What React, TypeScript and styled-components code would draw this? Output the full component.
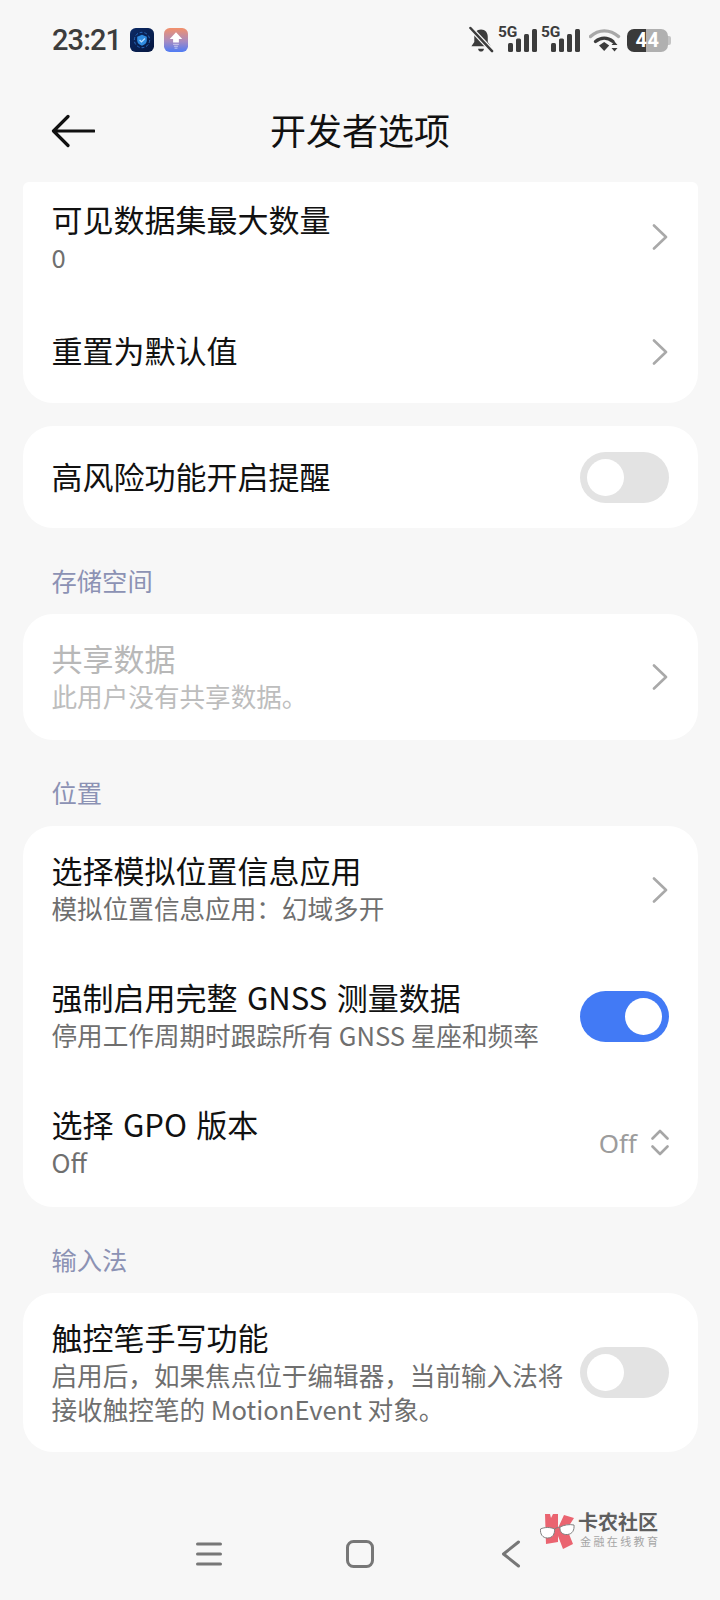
import React from "react";
import styled, { createGlobalStyle } from "styled-components";

const Global = createGlobalStyle`
  html, body { margin: 0; padding: 0; background: #f7f7f7; }
  body { width: 720px; height: 1600px; overflow: hidden; font-family: "Noto Sans CJK SC", "Noto Sans", sans-serif; }
  * { box-sizing: border-box; }
`;

const Page = styled.div`
  position: relative;
  width: 720px;
  height: 1600px;
  display: flex;
  flex-direction: column;
  background: #f7f7f7;
  overflow: hidden;
`;

const StatusBar = styled.div`
  height: 80px;
  padding: 0 52px 0 52px;
  display: flex;
  align-items: center;
  justify-content: space-between;
`;
const StatusGroup = styled.div<{ $gap: number }>`
  display: flex;
  align-items: center;
  gap: ${(p) => p.$gap}px;
`;
const Clock = styled.span`
  font-family: "Roboto", sans-serif;
  font-size: 29px;
  font-weight: 500;
  letter-spacing: -0.9px;
  color: #3c3c3c;
  margin-right: -1px;
  line-height: 1;
`;
const SignalBox = styled.span`
  position: relative;
  display: block;
  width: 39px;
  height: 28px;
`;
const FiveG = styled.span`
  position: absolute;
  left: 0;
  top: -2px;
  font-family: "Roboto", sans-serif;
  font-size: 15.5px;
  font-weight: 700;
  line-height: 16px;
  color: #3c3c3c;
  letter-spacing: -0.2px;
`;
const WifiSlot = styled.span`
  display: block;
  height: 24px;
  margin: 0 2px 0 5px;
`;
const BatteryBody = styled.span`
  position: relative;
  display: flex;
  align-items: center;
  justify-content: center;
  width: 41px;
  height: 23px;
  border-radius: 7px;
  background: linear-gradient(90deg, #3a3a3a 0 46%, #b0b0b0 46% 100%);
  color: #fff;
  font-family: "Roboto", sans-serif;
  font-weight: 700;
  font-size: 20px;
  line-height: 23px;
  letter-spacing: 0.6px;
  &::after {
    content: "";
    position: absolute;
    right: -3px;
    top: 7px;
    width: 3px;
    height: 9px;
    border-radius: 0 2px 2px 0;
    background: #c4c4c4;
  }
`;

const Header = styled.div`
  height: 102px;
  padding: 0 52px 0 51px;
  display: grid;
  grid-template-columns: 45px 1fr 44px;
  align-items: center;
`;
const Title = styled.h1`
  margin: -4px 0 0;
  text-align: center;
  font-size: 36px;
  font-weight: 400;
  line-height: 44px;
  color: #111;
`;

const Content = styled.div`
  flex: 1;
  padding: 0 22.5px;
  display: flex;
  flex-direction: column;
`;
const Card = styled.div<{ $cut?: boolean }>`
  background: #fff;
  border-radius: ${(p) => (p.$cut ? "6px 6px 30px 30px" : "30px")};
  overflow: hidden;
  margin-bottom: ${(p) => (p.$cut ? "23px" : "0")};
`;
const SectionLabel = styled.div`
  height: 86px;
  padding: 35px 0 0 29px;
  font-size: 25.3px;
  line-height: 34px;
  color: #8c92b4;
`;
const Row = styled.div<{ $h?: number; $top?: number }>`
  display: flex;
  align-items: center;
  justify-content: space-between;
  min-height: ${(p) => p.$h ?? 127}px;
  margin-top: ${(p) => p.$top ?? 0}px;
  padding: 0 28.5px 0 29px;
`;
const RowText = styled.div<{ $lift?: number }>`
  display: flex;
  flex-direction: column;
  min-width: 0;
  padding-bottom: ${(p) => p.$lift ?? 3}px;
`;
const RowTitle = styled.div<{ $off?: boolean }>`
  font-size: 31px;
  line-height: 40px;
  word-spacing: 2.5px;
  white-space: nowrap;
  color: ${(p) => (p.$off ? "#b8b8b8" : "#111")};
`;
const RowSub = styled.div<{ $off?: boolean }>`
  font-size: 25.6px;
  line-height: 36px;
  color: ${(p) => (p.$off ? "#bdbdbd" : "#6f6f6f")};
  white-space: nowrap;
`;
const RowSubWrap = styled(RowSub)`
  line-height: 34px;
  margin-top: 1px;
  width: 516px;
  white-space: normal;
`;
const Toggle = styled.span<{ $on?: boolean }>`
  flex: none;
  display: flex;
  align-items: center;
  justify-content: ${(p) => (p.$on ? "flex-end" : "flex-start")};
  width: 89px;
  height: 51px;
  padding: 0 7px;
  border-radius: 26px;
  background: ${(p) => (p.$on ? "#427af5" : "#e3e3e3")};
`;
const Knob = styled.span`
  display: block;
  width: 37px;
  height: 37px;
  border-radius: 50%;
  background: #fff;
`;
const Value = styled.div`
  display: flex;
  align-items: center;
  gap: 14px;
  padding-bottom: 2px;
  font-family: "Noto Sans", sans-serif;
  font-size: 26px;
  color: #9c9c9c;
`;

const NavBar = styled.div`
  position: absolute;
  left: 0;
  right: 0;
  bottom: 32px;
  height: 28px;
`;
const NavRow = styled.div`
  height: 100%;
  padding-left: 196px;
  display: flex;
  align-items: center;
  gap: 124px;
`;
const Mark = styled.div`
  position: absolute;
  left: 540px;
  top: 1510px;
  display: flex;
  gap: 3px;
`;
const MarkText = styled.div`
  display: flex;
  flex-direction: column;
`;
const MarkName = styled.span`
  font-size: 20px;
  font-weight: 700;
  line-height: 24px;
  color: #5f5f5f;
`;
const MarkSub = styled.span`
  font-size: 11px;
  line-height: 12px;
  margin-top: 1px;
  color: #a5a5a5;
  letter-spacing: 2.4px;
  padding-left: 2px;
  white-space: nowrap;
`;

const Chevron = () => (
  <svg width="18" height="26" viewBox="0 0 18 26" fill="none" style={{ flex: "none" }}>
    <path d="M3 1.500 15 13 3 24.500" stroke="#a9a9a9" strokeWidth="2.600" strokeLinecap="round" strokeLinejoin="round" />
  </svg>
);
const UpDown = () => (
  <svg width="18" height="27" viewBox="0 0 18 27" fill="none">
    <path d="M1.500 9.500 9 2l7.500 7.500M1.500 17.500 9 25l7.500-7.500" stroke="#a6a6a6" strokeWidth="2.600" strokeLinecap="round" strokeLinejoin="round" />
  </svg>
);
const BackArrow = () => (
  <svg width="44" height="34" viewBox="0 0 44 34" fill="none">
    <path d="M17 2.500 2.500 17 17 31.500M3 17h40" stroke="#111" strokeWidth="3.200" strokeLinecap="round" strokeLinejoin="round" />
  </svg>
);
const AppShield = () => (
  <svg width="24" height="24" viewBox="0 0 25 25">
    <defs>
      <linearGradient id="nv" x1="0" y1="0" x2="1" y2="1">
        <stop offset="0" stopColor="#0c2a66" />
        <stop offset="1" stopColor="#06173f" />
      </linearGradient>
    </defs>
    <rect width="25" height="25" rx="6" fill="url(#nv)" />
    <circle cx="12.500" cy="12.500" r="8" fill="none" stroke="#2a6cc0" strokeWidth="1" strokeDasharray="3 2" />
    <path d="M12.500 7 17.500 9v4c0 2.600-2 4.400-5 5.400-3-1-5-2.800-5-5.400V9Z" fill="#2f8be0" />
    <path d="m10 12.500 2 2 3.500-3.500" fill="none" stroke="#bfe0ff" strokeWidth="1.300" />
  </svg>
);
const AppUpload = () => (
  <svg width="24" height="24" viewBox="0 0 25 25">
    <defs>
      <linearGradient id="up" x1="0" y1="0" x2="0" y2="1">
        <stop offset="0" stopColor="#f3906a" />
        <stop offset="0.55" stopColor="#a88bc0" />
        <stop offset="1" stopColor="#4f7cf5" />
      </linearGradient>
    </defs>
    <rect width="25" height="25" rx="6" fill="url(#up)" />
    <path d="M12.500 4.500 19 11.500h-3.500V15h-6v-3.500H6Z" fill="#fff" />
    <path d="M9.500 17h6M10.500 19h4M11 21h3" stroke="#fff" strokeWidth="1" opacity=".6" />
  </svg>
);
const BellOff = () => (
  <svg width="25" height="28" viewBox="0 0 26 28" fill="none">
    <path d="M12.500 3c-4.500 0-7 3.300-7 7.500V16L2.500 20.500h20L19.500 16v-5.500C19.500 6.300 17 3 12.500 3Z" fill="#3c3c3c" />
    <path d="M9.500 23h6c0 1.800-1.300 3-3 3s-3-1.200-3-3Z" fill="#3c3c3c" />
    <path d="M1 1 24.500 26" stroke="#f7f7f7" strokeWidth="5" />
    <path d="M1.500 1.500 24 25.500" stroke="#3c3c3c" strokeWidth="2.600" strokeLinecap="round" />
  </svg>
);
const Bars = () => (
  <svg width="29" height="23" viewBox="0 0 29 23" style={{ position: "absolute", left: 10, top: 3 }}>
    <rect x="0" y="14" width="5" height="9" rx="1.500" fill="#3c3c3c" />
    <rect x="8" y="9.500" width="5" height="13.500" rx="1.500" fill="#3c3c3c" />
    <rect x="16" y="5" width="5" height="18" rx="1.500" fill="#3c3c3c" />
    <rect x="24" y="0" width="5" height="23" rx="1.500" fill="#3c3c3c" />
  </svg>
);
const Wifi = () => (
  <svg width="32" height="24" viewBox="0 0 32 24" fill="none">
    <path d="M1.500 8.500C9.500 1 21 1 29.500 8.500" stroke="#a8a8a8" strokeWidth="3.400" strokeLinecap="round" />
    <path d="M6.500 13.500c5.500-4.500 12-4.500 17.500 0" stroke="#3c3c3c" strokeWidth="3.400" strokeLinecap="round" />
    <path d="M10 17.500 15.200 14l5 3.500-5 5.500Z" fill="#3c3c3c" />
    <path d="m25.500 13.500 3 3.500h-6ZM25.500 23.500l3-3.500h-6Z" fill="#3c3c3c" />
  </svg>
);
const MenuIcon = () => (
  <svg width="26" height="24" viewBox="0 0 26 24" style={{ flex: "none" }}>
    <path d="M1.500 2h23M1.500 12h23M1.500 22h23" stroke="#777" strokeWidth="3" strokeLinecap="round" />
  </svg>
);
const HomeIcon = () => (
  <svg width="28" height="28" viewBox="0 0 28 28" style={{ flex: "none" }} fill="none">
    <rect x="1.500" y="1.500" width="25" height="25" rx="6" stroke="#777" strokeWidth="3" />
  </svg>
);
const BackIcon = () => (
  <svg width="20" height="28" viewBox="0 0 20 28" style={{ flex: "none", marginLeft: 3 }} fill="none">
    <path d="M17.500 2 2.500 14l15 12" stroke="#777" strokeWidth="3" strokeLinecap="round" strokeLinejoin="round" />
  </svg>
);
const MarkLogo = () => (
  <svg width="35" height="37" viewBox="0 0 35 37" style={{ marginTop: 3 }}>
    <path d="M5 1h5l1 4 2-4h5v14L24 2l10 3-7 11 6 15-10 5-5-13v6l-12 2Z" fill="#ea6470" />
    <path d="M0.500 16c4-2 10-2 14 0 .5 5-2 9-7 9s-7.500-4-7-9Z" fill="#fff" stroke="#808080" strokeWidth="1" />
    <path d="M20 14c4-2 9-3 14-2 .5 5-1.500 9-6.500 9.500S19.500 19 20 14Z" fill="#fff" stroke="#808080" strokeWidth="1" />
    <path d="M14.500 16c2-1.500 4-1.500 5.500-2" stroke="#808080" strokeWidth="1" fill="none" />
  </svg>
);

const Signal = () => (
  <SignalBox>
    <FiveG>5G</FiveG>
    <Bars />
  </SignalBox>
);

export default function App() {
  return (
    <Page>
      <Global />
      <StatusBar>
        <StatusGroup $gap={10}>
          <Clock>23:21</Clock>
          <AppShield />
          <AppUpload />
        </StatusGroup>
        <StatusGroup $gap={4}>
          <BellOff />
          <Signal />
          <Signal />
          <WifiSlot>
            <Wifi />
          </WifiSlot>
          <BatteryBody>44</BatteryBody>
        </StatusGroup>
      </StatusBar>
      <Header>
        <BackArrow />
        <Title>开发者选项</Title>
      </Header>
      <Content>
        <Card $cut>
          <Row $h={126} $top={-8}>
            <RowText $lift={0}>
              <RowTitle>可见数据集最大数量</RowTitle>
              <RowSub>0</RowSub>
            </RowText>
            <Chevron />
          </Row>
          <Row $h={103}>
            <RowText>
              <RowTitle>重置为默认值</RowTitle>
            </RowText>
            <Chevron />
          </Row>
        </Card>
        <Card>
          <Row $h={102}>
            <RowText>
              <RowTitle>高风险功能开启提醒</RowTitle>
            </RowText>
            <Toggle>
              <Knob />
            </Toggle>
          </Row>
        </Card>
        <SectionLabel>存储空间</SectionLabel>
        <Card>
          <Row $h={126}>
            <RowText>
              <RowTitle $off>共享数据</RowTitle>
              <RowSub $off>此用户没有共享数据。</RowSub>
            </RowText>
            <Chevron />
          </Row>
        </Card>
        <SectionLabel>位置</SectionLabel>
        <Card>
          <Row>
            <RowText>
              <RowTitle>选择模拟位置信息应用</RowTitle>
              <RowSub>模拟位置信息应用：幻域多开</RowSub>
            </RowText>
            <Chevron />
          </Row>
          <Row>
            <RowText>
              <RowTitle>强制启用完整 GNSS 测量数据</RowTitle>
              <RowSub>停用工作周期时跟踪所有 GNSS 星座和频率</RowSub>
            </RowText>
            <Toggle $on>
              <Knob />
            </Toggle>
          </Row>
          <Row>
            <RowText>
              <RowTitle>选择 GPO 版本</RowTitle>
              <RowSub>Off</RowSub>
            </RowText>
            <Value>
              Off
              <UpDown />
            </Value>
          </Row>
        </Card>
        <SectionLabel>输入法</SectionLabel>
        <Card>
          <Row $h={159}>
            <RowText>
              <RowTitle>触控笔手写功能</RowTitle>
              <RowSubWrap>启用后，如果焦点位于编辑器，当前输入法将接收触控笔的 MotionEvent 对象。</RowSubWrap>
            </RowText>
            <Toggle>
              <Knob />
            </Toggle>
          </Row>
        </Card>
      </Content>
      <NavBar>
        <NavRow>
          <MenuIcon />
          <HomeIcon />
          <BackIcon />
        </NavRow>
      </NavBar>
      <Mark>
        <MarkLogo />
        <MarkText>
          <MarkName>卡农社区</MarkName>
          <MarkSub>金融在线教育</MarkSub>
        </MarkText>
      </Mark>
    </Page>
  );
}
